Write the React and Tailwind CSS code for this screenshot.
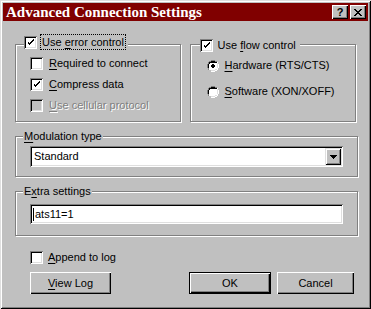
import React from "react";

const FONT = { fontFamily: '"Liberation Sans", Arial, sans-serif' };

function U({ children }) {
  return <span className="underline underline-offset-[2px]">{children}</span>;
}

function Check({ checked, disabled }) {
  return (
    <div className="w-[13px] h-[13px] shrink-0 bg-white shadow-[inset_1px_1px_0_#808080,inset_-1px_-1px_0_#fff,inset_2px_2px_0_#000,inset_-2px_-2px_0_#dfdfdf] flex items-center justify-center"
      style={disabled ? { background: "#c0c0c0" } : undefined}>
      {checked && (
        <svg width="7" height="7" viewBox="0 0 7 7" shapeRendering="crispEdges">
          <path d="M0 2h1v3h1v1h1v-1h1v-1h1v-1h1v-1h1v-2h-1v1h-1v1h-1v1h-1v1h-1v-1h-1v-1h-1z" fill={disabled ? "#808080" : "#000"} />
        </svg>
      )}
    </div>
  );
}

function Radio({ checked }) {
  return (
    <svg width="12" height="12" viewBox="0 0 12 12" shapeRendering="crispEdges" className="shrink-0">
      <path d="M4 0h4v1h2v1h-2v-1h-4v1h-2v2h-1v4h1v2h-1v-2h-1v-4h1v-2h1v-1h2z" fill="#808080" />
      <path d="M2 3h8v1h1v4h-1v2h-2v1h-4v-1h-2v-2h-1v-4h1z" fill="#fff" />
      <path d="M4 1h4v1h2v1h-8v-1h2z M1 4h1v4h-1z M2 2h1v2h-1z" fill="#000" />
      <path d="M10 2h1v2h1v4h-1v2h-1v1h-2v1h-4v-1h4v-1h2v-2h1v-4h-1z" fill="#fff" />
      <path d="M10 3h1v5h-1v2h-2v1h-4v-1h4v-1h2z" fill="#dfdfdf" />
      {checked && <path d="M5 4h2v1h1v2h-1v1h-2v-1h-1v-2h1z" fill="#000" />}
    </svg>
  );
}

function Group({ className, label, children }) {
  return (
    <div className={"border border-[#808080] shadow-[inset_1px_1px_0_#fff,1px_1px_0_#fff] " + className}>
      {label}
      {children}
    </div>
  );
}

function Btn({ children, def, className }) {
  return (
    <div className={"h-[22px] flex items-center justify-center bg-[#c0c0c0] text-black " + (def ? "border border-black shadow-[inset_1px_1px_0_#fff,inset_-1px_-1px_0_#000,inset_-2px_-2px_0_#808080] " : "shadow-[inset_1px_1px_0_#fff,inset_-1px_-1px_0_#000,inset_-2px_-2px_0_#808080] ") + className}>
      {children}
    </div>
  );
}

export default function App() {
  return (
    <div style={FONT} className="w-[371px] h-[309px] bg-[#c0c0c0] p-[3px] text-[11px] leading-[13px] text-black shadow-[inset_1px_1px_0_#dfdfdf,inset_-1px_-1px_0_#000,inset_2px_2px_0_#fff,inset_-2px_-2px_0_#808080] overflow-hidden">
      {/* title bar */}
      <div className="h-[18px] bg-[#800000] flex items-center justify-between pl-[3px] pr-[2px]">
        <span className="text-white font-bold text-[15px] leading-[18px]" style={{ fontFamily: '"Liberation Serif", "Times New Roman", serif' }}>
          Advanced Connection Settings
        </span>
        <div className="flex gap-[2px]">
          <div className="w-[16px] h-[14px] bg-[#c0c0c0] shadow-[inset_1px_1px_0_#fff,inset_-1px_-1px_0_#000,inset_-2px_-2px_0_#808080] flex items-center justify-center font-bold text-[11px]">?</div>
          <div className="w-[16px] h-[14px] bg-[#c0c0c0] shadow-[inset_1px_1px_0_#fff,inset_-1px_-1px_0_#000,inset_-2px_-2px_0_#808080] flex items-center justify-center">
            <svg width="8" height="7" viewBox="0 0 8 7" shapeRendering="crispEdges">
              <path d="M0 0h2v1h1v1h2v-1h1v-1h2v1h-1v1h-1v1h-1v1h1v1h1v1h1v1h-2v-1h-1v-1h-2v1h-1v1h-2v-1h1v-1h1v-1h1v-1h-1v-1h-1v-1h-1z" fill="#000" />
            </svg>
          </div>
        </div>
      </div>

      {/* client */}
      <div className="px-[12px] pt-[23px]">
        <div className="flex gap-[9px]">
          <Group className="w-[166px] h-[78px]" label={
            <div className="flex items-center -mt-[11px] ml-[8px] h-[16px] bg-[#c0c0c0] w-fit pr-[2px]">
              <Check checked />
              <span className="ml-[3px] px-[2px] h-[16px] leading-[16px] block outline outline-1 outline-dotted outline-black -outline-offset-1">Use <U>e</U>rror control</span>
            </div>
          }>
            <div className="flex flex-col gap-[8px] pl-[14px] pt-[7px]">
              <div className="flex items-center gap-[6px]"><Check /><span><U>R</U>equired to connect</span></div>
              <div className="flex items-center gap-[6px]"><Check checked /><span><U>C</U>ompress data</span></div>
              <div className="flex items-center gap-[6px]"><Check disabled /><span className="text-[#808080] [text-shadow:1px_1px_0_#fff]"><U>U</U>se cellular protocol</span></div>
            </div>
          </Group>
          <Group className="w-[167px] h-[78px]" label={
            <div className="flex items-center -mt-[8px] ml-[9px] h-[16px] bg-[#c0c0c0] w-fit pr-[4px]">
              <Check checked />
              <span className="ml-[5px]">Use <U>f</U>low control</span>
            </div>
          }>
            <div className="flex flex-col gap-[13px] pl-[16px] pt-[6px]">
              <div className="flex items-center gap-[6px]"><Radio checked /><span><U>H</U>ardware (RTS/CTS)</span></div>
              <div className="flex items-center gap-[6px]"><Radio /><span><U>S</U>oftware (XON/XOFF)</span></div>
            </div>
          </Group>
        </div>

        <Group className="w-[343px] h-[41px] mt-[14px]" label={
          <div className="-mt-[7px] ml-[7px] bg-[#c0c0c0] w-fit px-[1px]"><U>M</U>odulation type</div>
        }>
          <div className="mx-[14px] mt-[3px] h-[21px] bg-white shadow-[inset_1px_1px_0_#808080,inset_-1px_-1px_0_#fff,inset_2px_2px_0_#000,inset_-2px_-2px_0_#dfdfdf] flex items-center pl-[4px] pr-[2px]">
            <span className="flex-1">Standard</span>
            <div className="w-[16px] h-[17px] bg-[#c0c0c0] shadow-[inset_1px_1px_0_#dfdfdf,inset_-1px_-1px_0_#000,inset_2px_2px_0_#fff,inset_-2px_-2px_0_#808080] flex items-center justify-center">
              <svg width="7" height="4" viewBox="0 0 7 4" shapeRendering="crispEdges"><path d="M0 0h7v1h-1v1h-1v1h-1v1h-1v-1h-1v-1h-1v-1h-1z" fill="#000" /></svg>
            </div>
          </div>
        </Group>

        <Group className="w-[343px] h-[45px] mt-[14px]" label={
          <div className="-mt-[7px] ml-[7px] bg-[#c0c0c0] w-fit px-[1px]">E<U>x</U>tra settings</div>
        }>
          <div className="mx-[14px] mt-[6px] h-[20px] bg-white shadow-[inset_1px_1px_0_#808080,inset_-1px_-1px_0_#fff,inset_2px_2px_0_#000,inset_-2px_-2px_0_#dfdfdf] flex items-center pl-[3px]">
            <span className="border-l border-black pl-[1px]">ats11=1</span>
          </div>
        </Group>

        <div className="flex items-center gap-[5px] ml-[15px] mt-[15px]"><Check /><span><U>A</U>ppend to log</span></div>

        <div className="flex mt-[8px] ml-[15px]">
          <Btn className="w-[81px]"><span><U>V</U>iew Log</span></Btn>
          <Btn def className="w-[82px] ml-[78px]">OK</Btn>
          <Btn className="w-[77px] ml-[6px]">Cancel</Btn>
        </div>
      </div>
    </div>
  );
}
